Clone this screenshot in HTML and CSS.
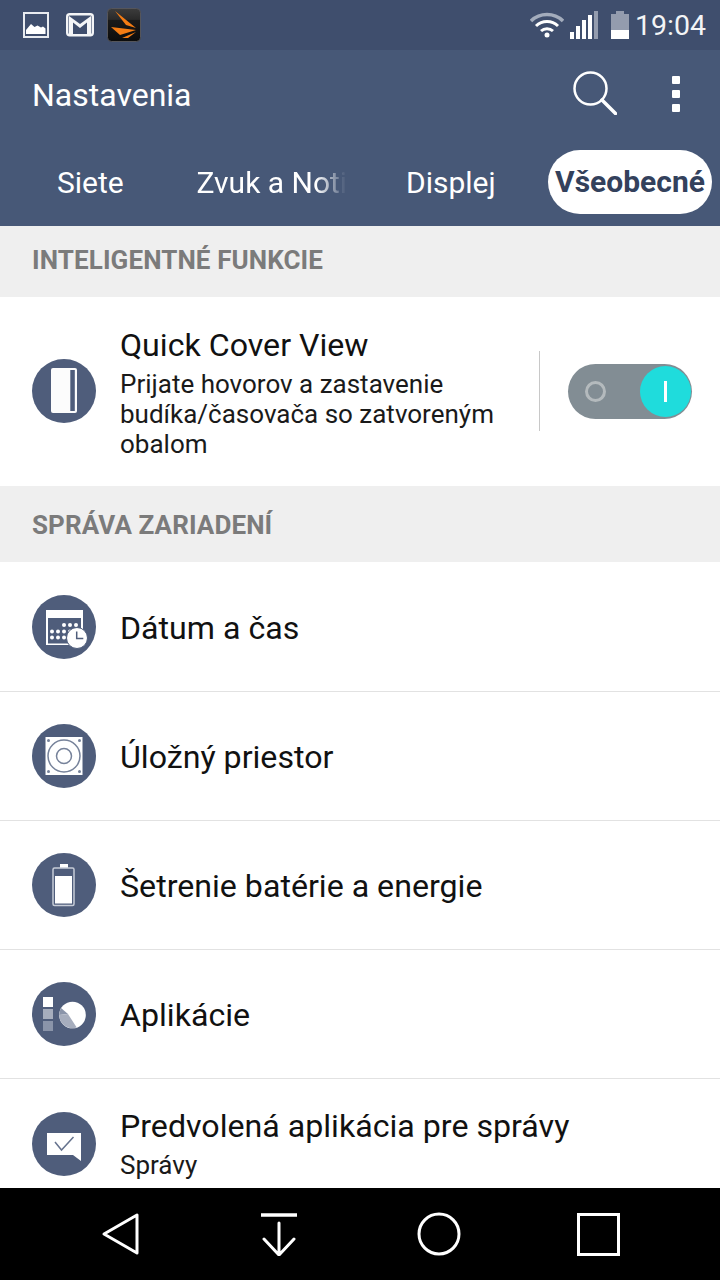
FILE: index.html
```html
<!DOCTYPE html>
<html lang="sk">
<head>
  <meta charset="UTF-8">
  <title>Nastavenia</title>
  <meta name="viewport" content="width=device-width, initial-scale=1">
  <link rel="stylesheet" href="styles.css">
</head>
<body>
  <div class="phone">
    <!-- Stavový riadok -->
    <div class="status-bar">
      <div class="status-left">
        <svg class="st-photo" width="26" height="26" viewBox="0 0 26 26"><rect x="1" y="1" width="24" height="24" fill="none" stroke="#e8ebf0" stroke-width="2"/><path d="M3 22v-4l5-6 3.500 3 3-1.500 3.500 2 2-1 2.500 2v5.500z" fill="#fff"/></svg>
        <svg class="st-mail" width="28" height="24" viewBox="0 0 28 24"><rect x="1.200" y="1.200" width="25.600" height="21" rx="2.500" fill="none" stroke="#f4f5f7" stroke-width="2.400"/><path d="M3 3l11 8 11-8v18h-4V9.500l-7 5.500-7-5.500V21H3z" fill="#f4f5f7"/></svg>
        <svg class="st-app" width="34" height="34" viewBox="0 0 34 34"><defs><linearGradient id="appbg" x1="0" y1="0" x2="0" y2="1"><stop offset="0" stop-color="#3c3c3c"/><stop offset=".33" stop-color="#2a2a2a"/><stop offset=".36" stop-color="#1a1a1a"/><stop offset="1" stop-color="#0c0c0c"/></linearGradient></defs><rect x=".5" y=".5" width="33" height="33" rx="4" fill="url(#appbg)" stroke="#55555a"/><path d="M8 3l21 17-10-3zM4 19l25 3-16 5zM15 30l14-6-8 6z" fill="#f47c14"/></svg>
      </div>
      <div class="status-right">
        <svg width="34" height="26" viewBox="0 0 34 26"><path d="M1 9a23 23 0 0 1 32 0" fill="none" stroke="#a3acbc" stroke-width="3.500"/><path d="M6 14a16 16 0 0 1 22 0M11 19a9 9 0 0 1 12 0" fill="none" stroke="#fff" stroke-width="3"/><circle cx="17" cy="23" r="2.500" fill="#fff"/></svg>
        <svg class="st-signal" width="28" height="28" viewBox="0 0 28 28"><path d="M0 21h4v7H0zM6 15h4v13H6zM12 9h4v19h-4zM18 4h4v24h-4z" fill="#fff"/><path d="M24 0h4v28h-4z" fill="#949cae"/></svg>
        <svg class="st-batt" width="18" height="28" viewBox="0 0 18 28"><path d="M5 0h8v3h5v16H0V3h5z" fill="#949cae"/><path d="M0 19h18v9H0z" fill="#fff"/></svg>
        <span class="clock">19:04</span>
      </div>
    </div>

    <!-- Panel s názvom a kartami -->
    <div class="toolbar">
      <div class="title-row">
        <span class="title">Nastavenia</span>
        <svg class="search-icon" width="44" height="44" viewBox="0 0 44 44"><circle cx="17.500" cy="17.500" r="16" fill="none" stroke="#fff" stroke-width="2.500"/><path d="M29 29l13.500 13.500" stroke="#fff" stroke-width="3.500" stroke-linecap="round"/></svg>
        <div class="more-dots"><i></i><i></i><i></i></div>
      </div>
      <div class="tabs">
        <span class="tab tab-siete">Siete</span>
        <span class="tab tab-zvuk">Zvuk a Noti</span>
        <span class="tab tab-displej">Displej</span>
        <span class="tab tab-active">Všeobecné</span>
      </div>
    </div>

    <div class="content">
      <div class="section-head section-first">INTELIGENTNÉ FUNKCIE</div>
      <div class="row row-cover">
        <div class="round-icon">
          <svg width="64" height="64" viewBox="0 0 64 64"><rect x="19" y="9" width="26" height="45" rx="2" fill="#fcfcfc"/><rect x="38.300" y="11" width="4.500" height="41" fill="#4f5d7b"/></svg>
        </div>
        <div class="row-text">
          <div class="row-title">Quick Cover View</div>
          <div class="row-sub">Prijate hovorov a zastavenie<br>budíka/časovača so zatvoreným<br>obalom</div>
        </div>
        <div class="toggle-wrap">
          <div class="toggle">
            <span class="toggle-ring"></span>
            <span class="toggle-knob"><i></i></span>
          </div>
        </div>
      </div>

      <div class="section-head">SPRÁVA ZARIADENÍ</div>
      <div class="row row-top">
        <div class="round-icon">
          <svg width="64" height="64" viewBox="0 0 64 64"><rect x="14" y="15" width="37" height="35" fill="#fff"/><rect x="16" y="23" width="33" height="25.500" fill="#4f5d7b"/><g fill="#fff"><circle cx="32" cy="30" r="2"/><circle cx="38" cy="30" r="2"/><circle cx="44" cy="30" r="2"/><circle cx="20" cy="36.500" r="2"/><circle cx="26" cy="36.500" r="2"/><circle cx="32" cy="36.500" r="2"/><circle cx="38" cy="36.500" r="2"/><circle cx="20" cy="42.500" r="2"/><circle cx="26" cy="42.500" r="2"/><circle cx="32" cy="42.500" r="2"/></g><circle cx="45" cy="43" r="10.500" fill="#fff" stroke="#4f5d7b" stroke-width="1"/><path d="M44.700 36.500v7h6.600" fill="none" stroke="#4f5d7b" stroke-width="1.500"/></svg>
        </div>
        <div class="row-title">Dátum a čas</div>
      </div>
      <div class="row">
        <div class="round-icon">
          <svg width="64" height="64" viewBox="0 0 64 64"><rect x="13.500" y="13" width="37" height="38" fill="#fff"/><circle cx="32" cy="32" r="16" fill="none" stroke="#76829a" stroke-width="1.500"/><circle cx="32" cy="32" r="7.500" fill="none" stroke="#76829a" stroke-width="1.500"/><g fill="#76829a"><circle cx="16.500" cy="16.500" r="1.500"/><circle cx="47.500" cy="16.500" r="1.500"/><circle cx="16.500" cy="47.500" r="1.500"/><circle cx="47.500" cy="47.500" r="1.500"/></g></svg>
        </div>
        <div class="row-title">Úložný priestor</div>
      </div>
      <div class="row">
        <div class="round-icon">
          <svg width="64" height="64" viewBox="0 0 64 64"><rect x="28" y="11" width="8" height="4" fill="#fff"/><rect x="21" y="15" width="21" height="37.500" rx="1.500" fill="none" stroke="#c6ccd7" stroke-width="1.500"/><rect x="23" y="23" width="17" height="27.500" fill="#fff"/></svg>
        </div>
        <div class="row-title">Šetrenie batérie a energie</div>
      </div>
      <div class="row">
        <div class="round-icon">
          <svg width="64" height="64" viewBox="0 0 64 64"><rect x="11" y="15" width="10" height="10" fill="#fff"/><rect x="11" y="27" width="10" height="10" fill="#a6adbd"/><rect x="11" y="39" width="10" height="10" fill="#8a94a9"/><circle cx="40.500" cy="33" r="13.300" fill="#fff"/><path d="M36 32L29 26A13.300 13.300 0 0 0 27.200 33z" fill="#8a94a9"/><path d="M36 32L27.200 33A13.300 13.300 0 0 0 44.700 45.600z" fill="#a6adbd"/></svg>
        </div>
        <div class="row-title">Aplikácie</div>
      </div>
      <div class="row row-last">
        <div class="round-icon">
          <svg width="64" height="64" viewBox="0 0 64 64"><path d="M15 21h34v28l-8-6H15z" fill="#fff"/><path d="M23 30l6.500 8 12-13" fill="none" stroke="#66738e" stroke-width="1.500"/></svg>
        </div>
        <div class="row-text">
          <div class="row-title">Predvolená aplikácia pre správy</div>
          <div class="row-sub">Správy</div>
        </div>
      </div>
    </div>

    <!-- Navigačný panel -->
    <div class="nav-bar">
      <svg width="40" height="44" viewBox="0 0 40 44"><path d="M36 3v38L3 22z" fill="none" stroke="#fff" stroke-width="3" stroke-linejoin="round"/></svg>
      <svg width="40" height="44" viewBox="0 0 40 44"><path d="M2 3h36" stroke="#fff" stroke-width="3.500"/><path d="M20 11v32M5 27l15 16 15-16" fill="none" stroke="#fff" stroke-width="3" stroke-linecap="round" stroke-linejoin="round"/></svg>
      <svg width="44" height="44" viewBox="0 0 44 44"><circle cx="22" cy="22" r="20" fill="none" stroke="#fff" stroke-width="3"/></svg>
      <svg width="43" height="43" viewBox="0 0 43 43"><rect x="1.500" y="1.500" width="40" height="40" fill="none" stroke="#fff" stroke-width="3"/></svg>
    </div>
  </div>
</body>
</html>
```

FILE: styles.css
```css
/* Estilos generales */
html, body {
  margin: 0;
  padding: 0;
}
body {
  font-family: Roboto, "Noto Sans", sans-serif;
  background-color: #fff;
}
.phone {
  width: 720px;
  height: 1280px;
  display: flex;
  flex-direction: column;
  overflow: hidden;
}

/* Stavový riadok */
.status-bar {
  height: 50px;
  flex: none;
  background-color: #3f4e6d;
  display: flex;
  justify-content: space-between;
  align-items: center;
  padding: 0 14px 0 23px;
}
.status-left, .status-right {
  display: flex;
  align-items: center;
}
.st-mail {
  margin-left: 17px;
}
.st-app {
  margin-left: 13px;
}
.status-right svg {
  display: block;
}
.st-signal {
  margin-left: 6px;
}
.st-batt {
  margin-left: 13px;
}
.clock {
  margin-left: 6px;
  font-size: 28.500px;
  color: #f3f4f6;
}

/* Panel */
.toolbar {
  height: 176px;
  flex: none;
  background-color: #475877;
  color: #fff;
}
.title-row {
  height: 100px;
  display: flex;
  align-items: center;
  padding: 0 40px 12px 32px;
  box-sizing: border-box;
}
.title {
  font-size: 32px;
  flex: 1;
  position: relative;
  top: 1px;
}
.search-icon {
  margin-right: 55px;
  position: relative;
  top: -1px;
}
.more-dots {
  display: flex;
  flex-direction: column;
  gap: 6px;
}
.more-dots i {
  display: block;
  width: 8px;
  height: 8px;
  background-color: #fff;
  border-radius: 1px;
}
.tabs {
  display: flex;
  align-items: center;
  height: 64px;
  font-size: 30px;
}
.tab {
  display: block;
  white-space: nowrap;
}
.tab-siete {
  margin-left: 57px;
  width: 139.500px;
}
.tab-zvuk {
  width: 149px;
  margin-right: 60.500px;
  overflow: hidden;
  -webkit-mask-image: linear-gradient(to right, #000 80%, transparent 100%);
  mask-image: linear-gradient(to right, #000 80%, transparent 100%);
}
.tab-displej {
  width: 142px;
}
.tab-active {
  width: 164px;
  height: 64px;
  line-height: 64px;
  background-color: #fff;
  border-radius: 32px;
  color: #33415c;
  font-weight: 700;
  text-align: center;
  overflow: hidden;
}

/* Obsah */
.content {
  flex: 1;
  overflow: hidden;
  min-height: 0;
}
.section-head {
  height: 76px;
  line-height: 78px;
  background-color: #efefef;
  color: #7b7b7b;
  font-size: 26px;
  font-weight: 700;
  letter-spacing: 0.1px;
  padding-left: 32px;
}
.section-first {
  height: 71px;
  line-height: 69px;
}
.row {
  height: 129px;
  box-sizing: border-box;
  border-bottom: 1px solid #e2e2e2;
  display: flex;
  align-items: center;
  padding-left: 32px;
  background-color: #fff;
}
.row-top {
  height: 130px;
}
.row-cover {
  height: 189px;
  padding-bottom: 1px;
  border-bottom: none;
}
.row-last {
  border-bottom: none;
}
.round-icon {
  width: 64px;
  height: 64px;
  flex: none;
  border-radius: 50%;
  background-color: #4f5d7b;
  margin-right: 24px;
}
.round-icon svg {
  display: block;
}
.row-text {
  flex: 1;
}
.row-title {
  font-size: 32.150px;
  color: #111;
  line-height: 38px;
}
.row > .row-title {
  padding-top: 2px;
}
.row-sub {
  font-size: 26px;
  color: #1a1a1a;
  line-height: 30px;
  margin-top: 5px;
}
.row-cover .row-text {
  padding-top: 2px;
}
.row-last .row-text {
  padding-bottom: 1px;
}

/* Prepínač */
.toggle-wrap {
  width: 181px;
  height: 80px;
  box-sizing: border-box;
  flex: none;
  border-left: 1px solid #c8c8c8;
  display: flex;
  align-items: center;
  padding-left: 28px;
}
.toggle {
  width: 124px;
  height: 55px;
  border-radius: 28px;
  background-color: #828d94;
  position: relative;
}
.toggle-ring {
  position: absolute;
  left: 17px;
  top: 17px;
  width: 21px;
  height: 21px;
  box-sizing: border-box;
  border: 3px solid #b4babd;
  border-radius: 50%;
}
.toggle-knob {
  position: absolute;
  right: 1px;
  top: 2px;
  width: 51px;
  height: 51px;
  border-radius: 50%;
  background-color: #1fdcdc;
  display: flex;
  align-items: center;
  justify-content: center;
}
.toggle-knob i {
  display: block;
  width: 3px;
  height: 21px;
  background-color: #fff;
}

/* Navigačný panel */
.nav-bar {
  height: 92px;
  flex: none;
  background-color: #000;
  display: grid;
  grid-template-columns: 158px 158px 160px 43px;
  align-items: center;
  padding-left: 101px;
}
```
